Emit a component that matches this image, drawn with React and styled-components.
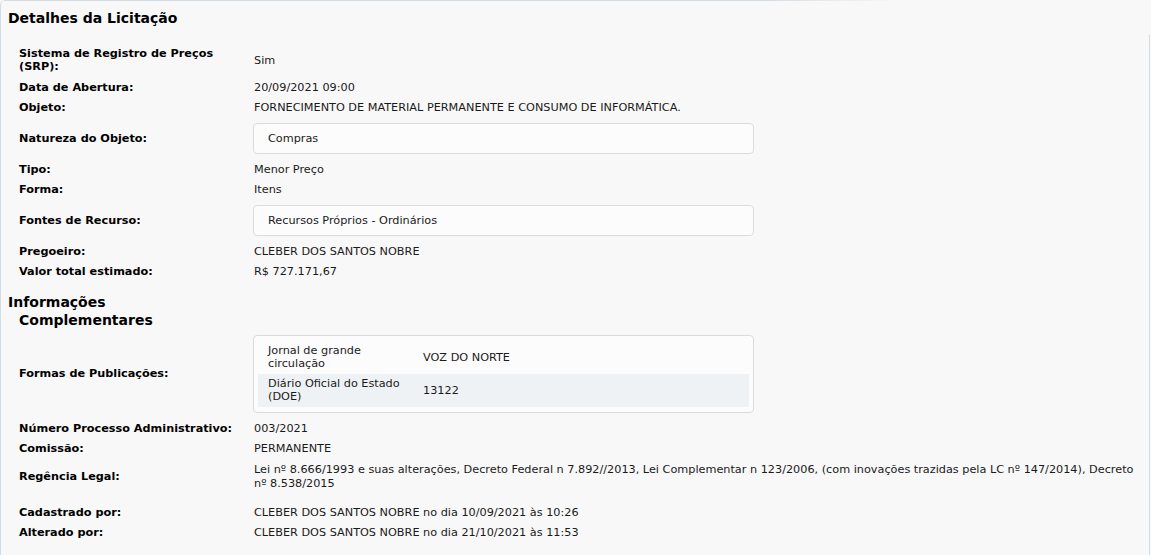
import React from "react";
import styled, { createGlobalStyle } from "styled-components";

const Global = createGlobalStyle`
  html, body {
    margin: 0;
    padding: 0;
    background: #f8f8f8;
  }
  body {
    font-family: "DejaVu Sans", Verdana, sans-serif;
    font-size: 11.25px;
    color: #111;
  }
`;

const Panel = styled.div`
  position: relative;
  width: 1150px;
  min-height: 555px;
  box-sizing: border-box;
  background: #f8f8f8;
  border-left: 1px solid #d3dde6;
  border-top-left-radius: 5px;
  padding: 8px 14px 0 7px;

  &::before {
    content: "";
    position: absolute;
    top: 0;
    left: 3px;
    width: 895px;
    height: 1px;
    background: linear-gradient(to right, #d3dde6 85%, rgba(211, 221, 230, 0));
  }
  &::after {
    content: "";
    position: absolute;
    top: 35px;
    right: 0;
    bottom: 0;
    width: 1px;
    background: #d3dde6;
  }
`;

const Title = styled.h2`
  margin: 0 0 15px;
  font-size: 14px;
  line-height: 20px;
  font-weight: bold;
  color: #000;
`;

const SubTitle = styled.h3`
  margin: 11px 0 0;
  width: 175px;
  font-size: 14px;
  line-height: 18px;
  font-weight: bold;
  color: #000;
  padding-left: 11px;
  text-indent: -11px;
`;

const Fields = styled.div`
  padding-left: 11px;
`;

const Row = styled.div`
  display: grid;
  grid-template-columns: 235px 1fr;
  align-items: center;
  padding: ${(p) => (p.$loose ? "4px 0 2px" : "4px 0 3.5px")};
  margin-bottom: ${(p) => (p.$gap ? "9px" : "0")};
  line-height: ${(p) => (p.$loose ? "14px" : "13px")};
`;

const BoxRow = styled.div`
  display: grid;
  grid-template-columns: 235px 1fr;
  align-items: center;
  margin: ${(p) => p.$margin || "5px 0"};
  line-height: 13px;
`;

const Label = styled.div`
  font-weight: bold;
  color: #000;
  padding-right: 20px;
`;

const Value = styled.div`
  color: #1a1a1a;
`;

const Box = styled.div`
  margin-left: -1px;
  width: 501px;
  box-sizing: border-box;
  background: #fcfcfd;
  border: 1px solid #d8dce1;
  border-radius: 4px;
  padding: ${(p) => (p.$table ? "5px 4px 5px" : "8px 14px")};
  color: #1a1a1a;
`;

const PubTable = styled.div`
  display: flex;
  flex-direction: column;
`;

const PubRow = styled.div`
  display: grid;
  grid-template-columns: 155px 1fr;
  align-items: center;
  padding: 3.5px 0;
  background: ${(p) => (p.$striped ? "#eff2f5" : "transparent")};
`;

const PubCell = styled.div`
  padding: 0 10px;
`;

const details = [
  { label: "Sistema de Registro de Preços (SRP):", value: "Sim" },
  { label: "Data de Abertura:", value: "20/09/2021 09:00" },
  {
    label: "Objeto:",
    value: "FORNECIMENTO DE MATERIAL PERMANENTE E CONSUMO DE INFORMÁTICA.",
  },
  { label: "Natureza do Objeto:", value: "Compras", box: true },
  { label: "Tipo:", value: "Menor Preço" },
  { label: "Forma:", value: "Itens" },
  { label: "Fontes de Recurso:", value: "Recursos Próprios - Ordinários", box: true },
  { label: "Pregoeiro:", value: "CLEBER DOS SANTOS NOBRE" },
  { label: "Valor total estimado:", value: "R$ 727.171,67" },
];

const publicacoes = [
  { name: "Jornal de grande circulação", value: "VOZ DO NORTE" },
  { name: "Diário Oficial do Estado (DOE)", value: "13122" },
];

const extras = [
  { label: "Número Processo Administrativo:", value: "003/2021" },
  { label: "Comissão:", value: "PERMANENTE" },
  {
    label: "Regência Legal:",
    value:
      "Lei nº 8.666/1993 e suas alterações, Decreto Federal n 7.892//2013, Lei Complementar n 123/2006, (com inovações trazidas pela LC nº 147/2014), Decreto nº 8.538/2015",
    loose: true,
  },
  {
    label: "Cadastrado por:",
    value: "CLEBER DOS SANTOS NOBRE no dia 10/09/2021 às 10:26",
  },
  {
    label: "Alterado por:",
    value: "CLEBER DOS SANTOS NOBRE no dia 21/10/2021 às 11:53",
  },
];

const App = () => {
  return (
    <>
      <Global />
      <Panel>
        <Title>Detalhes da Licitação</Title>
        <Fields>
          {details.map((item, index) =>
            item.box ? (
              <BoxRow key={index}>
                <Label>{item.label}</Label>
                <Box>{item.value}</Box>
              </BoxRow>
            ) : (
              <Row key={index}>
                <Label>{item.label}</Label>
                <Value>{item.value}</Value>
              </Row>
            )
          )}
        </Fields>

        <SubTitle>Informações Complementares</SubTitle>

        <Fields>
          <BoxRow $margin="6px 0 5px">
            <Label>Formas de Publicações:</Label>
            <Box $table>
              <PubTable>
                {publicacoes.map((pub, index) => (
                  <PubRow key={index} $striped={index % 2 === 1}>
                    <PubCell>{pub.name}</PubCell>
                    <PubCell>{pub.value}</PubCell>
                  </PubRow>
                ))}
              </PubTable>
            </Box>
          </BoxRow>
          {extras.map((item, index) => (
            <Row key={index} $loose={item.loose} $gap={item.loose}>
              <Label>{item.label}</Label>
              <Value>{item.value}</Value>
            </Row>
          ))}
        </Fields>
      </Panel>
    </>
  );
};

export default App;
